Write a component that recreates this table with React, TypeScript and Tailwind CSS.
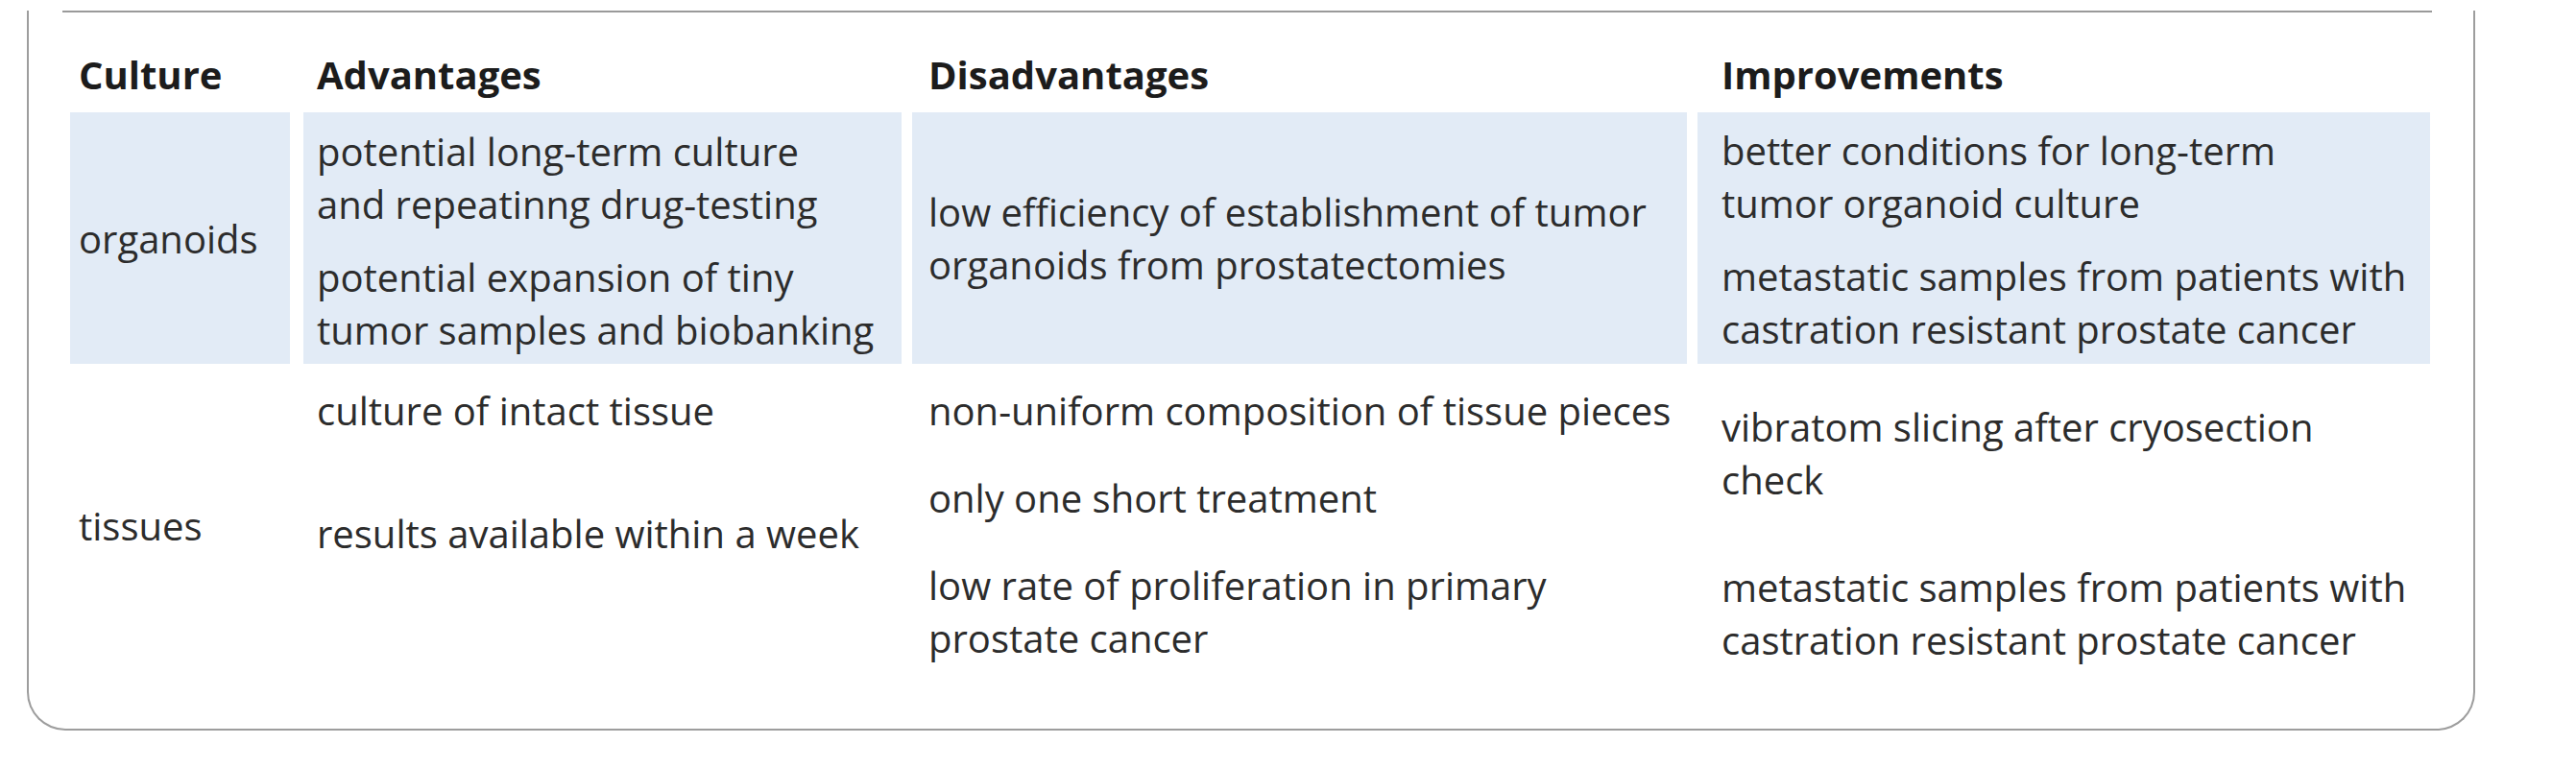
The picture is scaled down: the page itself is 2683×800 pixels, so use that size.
import React from "react";

type Item = string[];

function Lines({ item }: { item: Item }) {
  return (
    <div>
      {item.map((line) => (
        <div key={line} className="whitespace-nowrap">
          {line}
        </div>
      ))}
    </div>
  );
}

export default function App() {
  return (
    <div className="min-h-[800px] w-[2683px] bg-white font-['Open_Sans',sans-serif] text-[40px] leading-[55px] text-[#2c2c2c]">
      <div className="ml-[28px] w-[2550px] rounded-b-[40px] border-2 border-t-0 border-[#9d9d9d] pb-[65px]">
        {/* top rule */}
        <div className="ml-[35px] mt-[11px] h-[2px] w-[2468px] bg-[#9a9a9a]" />

        <div className="ml-[43px]">
          {/* header */}
          <div className="mt-[37px] flex h-[67px] text-[40px] font-bold text-[#1c1c1c]">
            <div className="w-[229px] pl-[9px]">Culture</div>
            <div className="ml-[14px] w-[623px] pl-[14px]">Advantages</div>
            <div className="ml-[11px] w-[807px] pl-[17px]">Disadvantages</div>
            <div className="ml-[11px] w-[763px] pl-[25px]">Improvements</div>
          </div>

          {/* organoids */}
          <div className="flex h-[262px]">
            <div className="flex w-[229px] items-center bg-[#e2ebf6] pl-[9px]">organoids</div>
            <div className="ml-[14px] flex w-[623px] flex-col gap-[21px] bg-[#e2ebf6] pl-[14px] pt-[13px]">
              <Lines item={["potential long-term culture", "and repeatinng drug-testing"]} />
              <Lines item={["potential expansion of tiny", "tumor samples and biobanking"]} />
            </div>
            <div className="ml-[11px] flex w-[807px] items-center bg-[#e2ebf6] pl-[17px]">
              <Lines item={["low efficiency of establishment of tumor", "organoids from prostatectomies"]} />
            </div>
            <div className="ml-[11px] flex w-[763px] flex-col gap-[21px] bg-[#e2ebf6] pl-[25px] pt-[12px]">
              <Lines item={["better conditions for long-term", "tumor organoid culture"]} />
              <Lines item={["metastatic samples from patients with", "castration resistant prostate cancer"]} />
            </div>
          </div>

          {/* tissues */}
          <div className="flex">
            <div className="w-[229px] pl-[9px] pt-[141px]">tissues</div>
            <div className="ml-[14px] flex w-[623px] flex-col gap-[73px] pl-[14px] pt-[21px]">
              <Lines item={["culture of intact tissue"]} />
              <Lines item={["results available within a week"]} />
            </div>
            <div className="ml-[11px] flex w-[807px] flex-col gap-[36px] pl-[17px] pt-[21px]">
              <Lines item={["non-uniform composition of tissue pieces"]} />
              <Lines item={["only one short treatment"]} />
              <Lines item={["low rate of proliferation in primary", "prostate cancer"]} />
            </div>
            <div className="ml-[11px] flex w-[763px] flex-col gap-[57px] pl-[25px] pt-[38px]">
              <Lines item={["vibratom slicing after cryosection", "check"]} />
              <Lines item={["metastatic samples from patients with", "castration resistant prostate cancer"]} />
            </div>
          </div>
        </div>
      </div>
    </div>
  );
}
